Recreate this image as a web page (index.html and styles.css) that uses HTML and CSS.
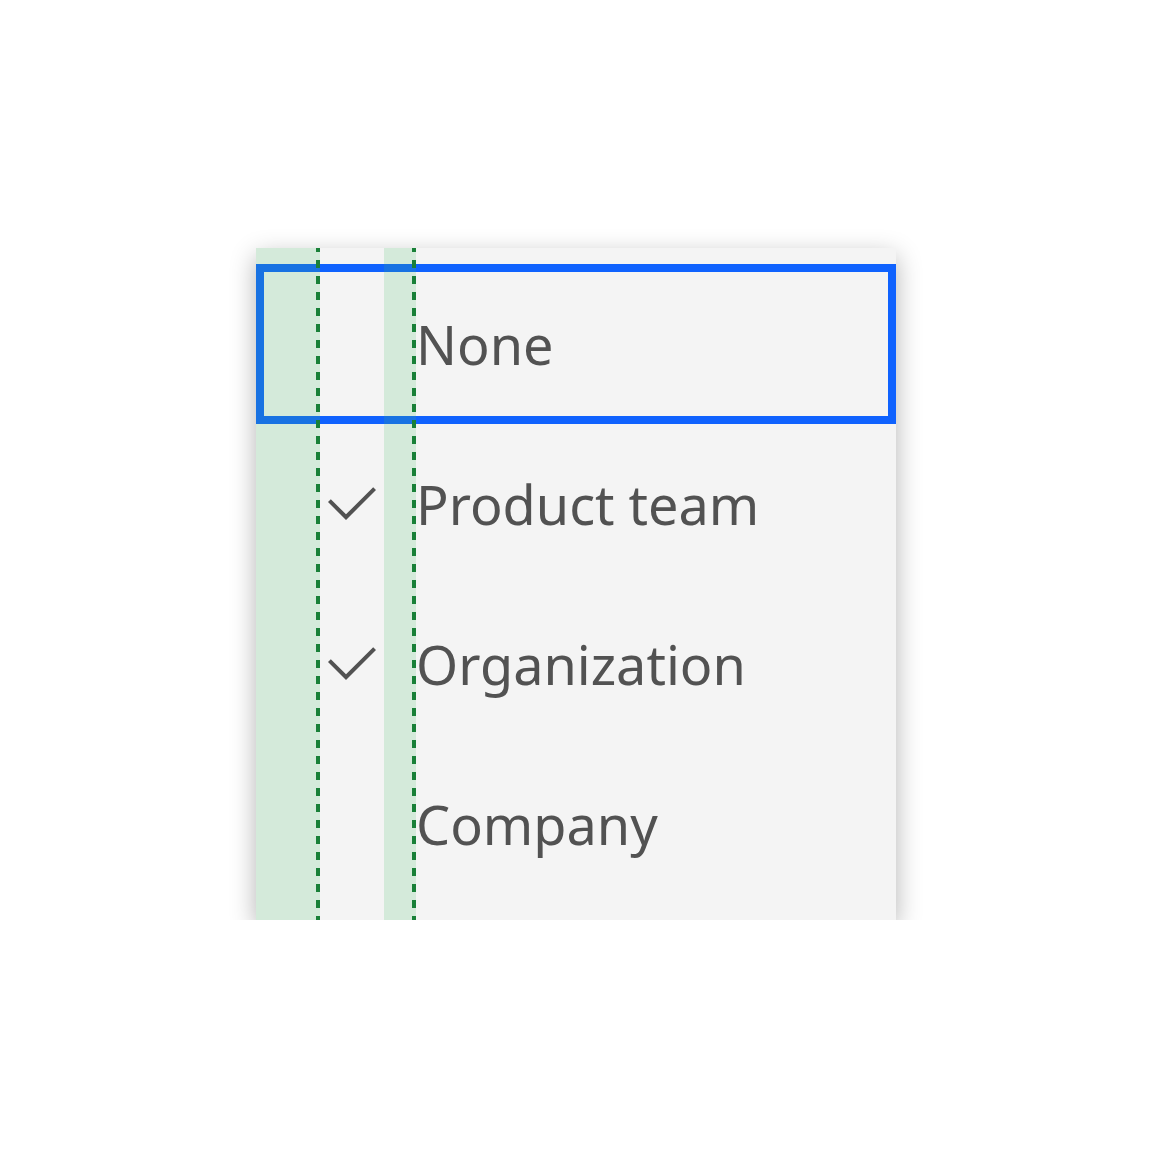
FILE: index.html
```html
<!DOCTYPE html>
<html lang="en">
<head>
<meta charset="utf-8">
<title>Menu spacing</title>
<link rel="stylesheet" href="styles.css">
</head>
<body>
<div class="stage">
  <div class="menu">
    <ul class="items">
      <li class="item focused"><span class="icon"></span><span class="label">None</span></li>
      <li class="item"><span class="icon"><svg viewBox="0 0 32 32" width="64" height="64"><path d="M13 24L4 15 5.414 13.586 13 21.171 26.586 7.586 28 9 13 24z"/></svg></span><span class="label">Product team</span></li>
      <li class="item"><span class="icon"><svg viewBox="0 0 32 32" width="64" height="64"><path d="M13 24L4 15 5.414 13.586 13 21.171 26.586 7.586 28 9 13 24z"/></svg></span><span class="label">Organization</span></li>
      <li class="item"><span class="icon"></span><span class="label">Company</span></li>
    </ul>
    <div class="guide stripe-a"></div>
    <div class="guide dash-a"></div>
    <div class="guide stripe-b"></div>
    <div class="guide dash-b"></div>
  </div>
</div>
</body>
</html>
```

FILE: styles.css
```css
html, body {
  margin: 0;
  padding: 0;
  background: #ffffff;
}

.stage {
  display: flex;
  justify-content: center;
  padding-top: 248px;
}

.menu {
  position: relative;
  width: 640px;
  background: #f4f4f4;
  box-shadow: 0 8px 24px rgba(0, 0, 0, 0.3);
  padding: 16px 0;
}

.items {
  list-style: none;
  margin: 0;
  padding: 0;
}

.item {
  display: flex;
  align-items: center;
  height: 160px;
  padding-left: 64px;
  gap: 32px;
  font-family: "Noto Sans", "Open Sans", sans-serif;
  font-size: 54px;
  color: #525252;
  letter-spacing: 0;
}

.item.focused {
  outline: 8px solid #0f62fe;
  outline-offset: -8px;
}

.icon {
  width: 64px;
  height: 64px;
  flex: none;
  display: flex;
}

.icon svg {
  fill: #525252;
}

.label {
  line-height: 1;
}

.guide {
  position: absolute;
  top: 0;
  bottom: 0;
  pointer-events: none;
}

.stripe-a {
  left: 0;
  width: 64px;
  background: rgba(66, 190, 101, 0.18);
}

.stripe-b {
  left: 128px;
  width: 32px;
  background: rgba(66, 190, 101, 0.18);
}

.dash-a,
.dash-b {
  width: 4px;
  background: repeating-linear-gradient(to bottom,
    #198038 0 4px,
    transparent 4px 12px,
    #198038 12px 16px);
}

.dash-a {
  left: 60px;
}

.dash-b {
  left: 156px;
}
```
